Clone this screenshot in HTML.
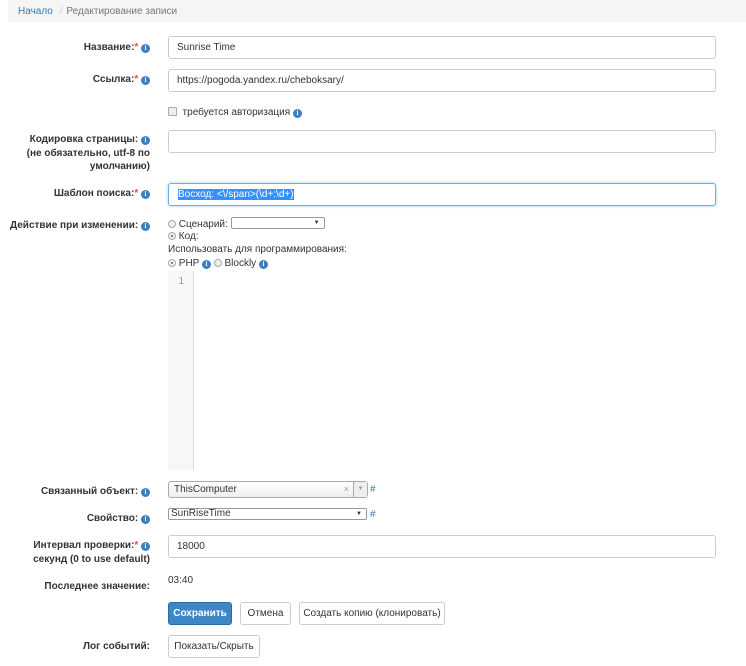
<!DOCTYPE html><html><head><meta charset="utf-8"><style>
body{margin:0;width:746px;height:666px;background:#fff;font-family:"Liberation Sans",sans-serif;font-size:10px;color:#333;position:relative;overflow:hidden}
.a{position:absolute;white-space:nowrap}
.bc{left:8px;top:0;width:738px;height:22px;background:#f5f5f5;}
.lbl{right:596px;font-weight:bold;text-align:right;line-height:13.5px}
.i{display:inline-block;width:9px;height:9px;border-radius:50%;background:#3a7fc1;color:#fff;font-size:7px;font-weight:bold;text-align:center;line-height:9px;vertical-align:0px;font-family:"Liberation Serif",serif}
.st{color:#d9534f}
.inp{left:168px;width:546px;height:21px;border:1px solid #ccc;border-radius:3px;box-sizing:content-box;line-height:21px;padding-left:0}
.inp span{margin-left:8px}
.rd{display:inline-block;width:8px;height:8px;border-radius:50%;border:1px solid #aaa;background:#eee;vertical-align:-1px;box-sizing:border-box;position:relative}
.rd.on::after{content:"";position:absolute;left:2px;top:2px;width:2px;height:2px;border-radius:50%;background:#666}
.btn{height:21px;border:1px solid #ccc;border-radius:3px;line-height:21px;text-align:center;background:#fff}
</style></head><body>
<div class="a bc"></div>
<div class="a" style="left:18px;top:6px;color:#337ab7">Начало <span style="color:#ccc;margin:0 4px">/</span><span style="color:#777">Редактирование записи</span></div>

<div class="a lbl" style="top:41px">Название:<span class="st">*</span> <span class="i">i</span></div>
<div class="a inp" style="top:36px"><span>Sunrise Time</span></div>
<div class="a lbl" style="top:73px">Ссылка:<span class="st">*</span> <span class="i">i</span></div>
<div class="a inp" style="top:69px"><span>https://pogoda.yandex.ru/cheboksary/</span></div>
<div class="a" style="left:168px;top:107px"><span style="display:inline-block;width:7px;height:7px;border:1px solid #aaa;background:#eee;border-radius:1px;vertical-align:-1px"></span>&nbsp; требуется авторизация <span class="i">i</span></div>
<div class="a lbl" style="top:133px">Кодировка страницы: <span class="i">i</span><br>(не обязательно, utf-8 по<br>умолчанию)</div>
<div class="a inp" style="top:130px"></div>
<div class="a lbl" style="top:187px">Шаблон поиска:<span class="st">*</span> <span class="i">i</span></div>
<div class="a inp" style="top:183px;border-color:#66afe9;box-shadow:0 0 3px rgba(102,175,233,.6)"><span style="background:#3390ff;color:#fff;margin-left:9px">Восход: &lt;\/span&gt;(\d+:\d+)</span></div>
<div class="a lbl" style="top:219px">Действие при изменении: <span class="i">i</span></div>
<div class="a" style="left:168px;top:217px"><span class="rd"></span> Сценарий: <span style="display:inline-block;width:92px;height:10px;border:1px solid #999;border-radius:2px;vertical-align:-2px;position:relative"><span style="position:absolute;right:4px;top:1px;font-size:6px;line-height:8px">▼</span></span></div>
<div class="a" style="left:168px;top:231px"><span class="rd on"></span> Код:</div>
<div class="a" style="left:168px;top:244px">Использовать для программирования:</div>
<div class="a" style="left:168px;top:258px"><span class="rd on"></span> PHP <span class="i">i</span> <span class="rd"></span> Blockly <span class="i">i</span></div>
<div class="a" style="left:168px;top:271px;width:25px;height:199px;background:#f7f7f7;border-right:1px solid #ddd"><div style="text-align:right;padding-right:9px;margin-top:5px;color:#999">1</div></div>

<div class="a lbl" style="top:485px">Связанный объект: <span class="i">i</span></div>
<div class="a" style="left:168px;top:481px;width:198px;height:15px;border:1px solid #aaa;border-radius:3px;background:linear-gradient(#fff,#eee);line-height:15px"><span style="margin-left:5px">ThisComputer</span><span style="position:absolute;right:18px;color:#999;font-size:9px">×</span><span style="position:absolute;right:0;top:0;width:13px;height:15px;border-left:1px solid #aaa;background:#eee;color:#999;font-size:6px;text-align:center">▼</span></div>
<div class="a" style="left:370px;top:484px;color:#337ab7">#</div>
<div class="a lbl" style="top:512px">Свойство: <span class="i">i</span></div>
<div class="a" style="left:168px;top:508px;width:197px;height:10px;border:1px solid #999;border-radius:2px;line-height:10px"><span style="margin-left:2px">SunRiseTime</span><span style="position:absolute;right:4px;font-size:6px">▼</span></div>
<div class="a" style="left:370px;top:509px;color:#337ab7">#</div>
<div class="a lbl" style="top:539px">Интервал проверки:<span class="st">*</span> <span class="i">i</span><br>секунд (0 to use default)</div>
<div class="a inp" style="top:535px"><span>18000</span></div>
<div class="a lbl" style="top:580px">Последнее значение:</div>
<div class="a" style="left:168px;top:575px">03:40</div>
<div class="a btn" style="left:168px;top:602px;width:62px;background:#3d87c8;border-color:#2e6da4;color:#fff;font-weight:bold">Сохранить</div>
<div class="a btn" style="left:240px;top:602px;width:49px">Отмена</div>
<div class="a btn" style="left:299px;top:602px;width:144px">Создать копию (клонировать)</div>
<div class="a lbl" style="top:640px">Лог событий:</div>
<div class="a btn" style="left:168px;top:635px;width:90px">Показать/Скрыть</div>
</body></html>
